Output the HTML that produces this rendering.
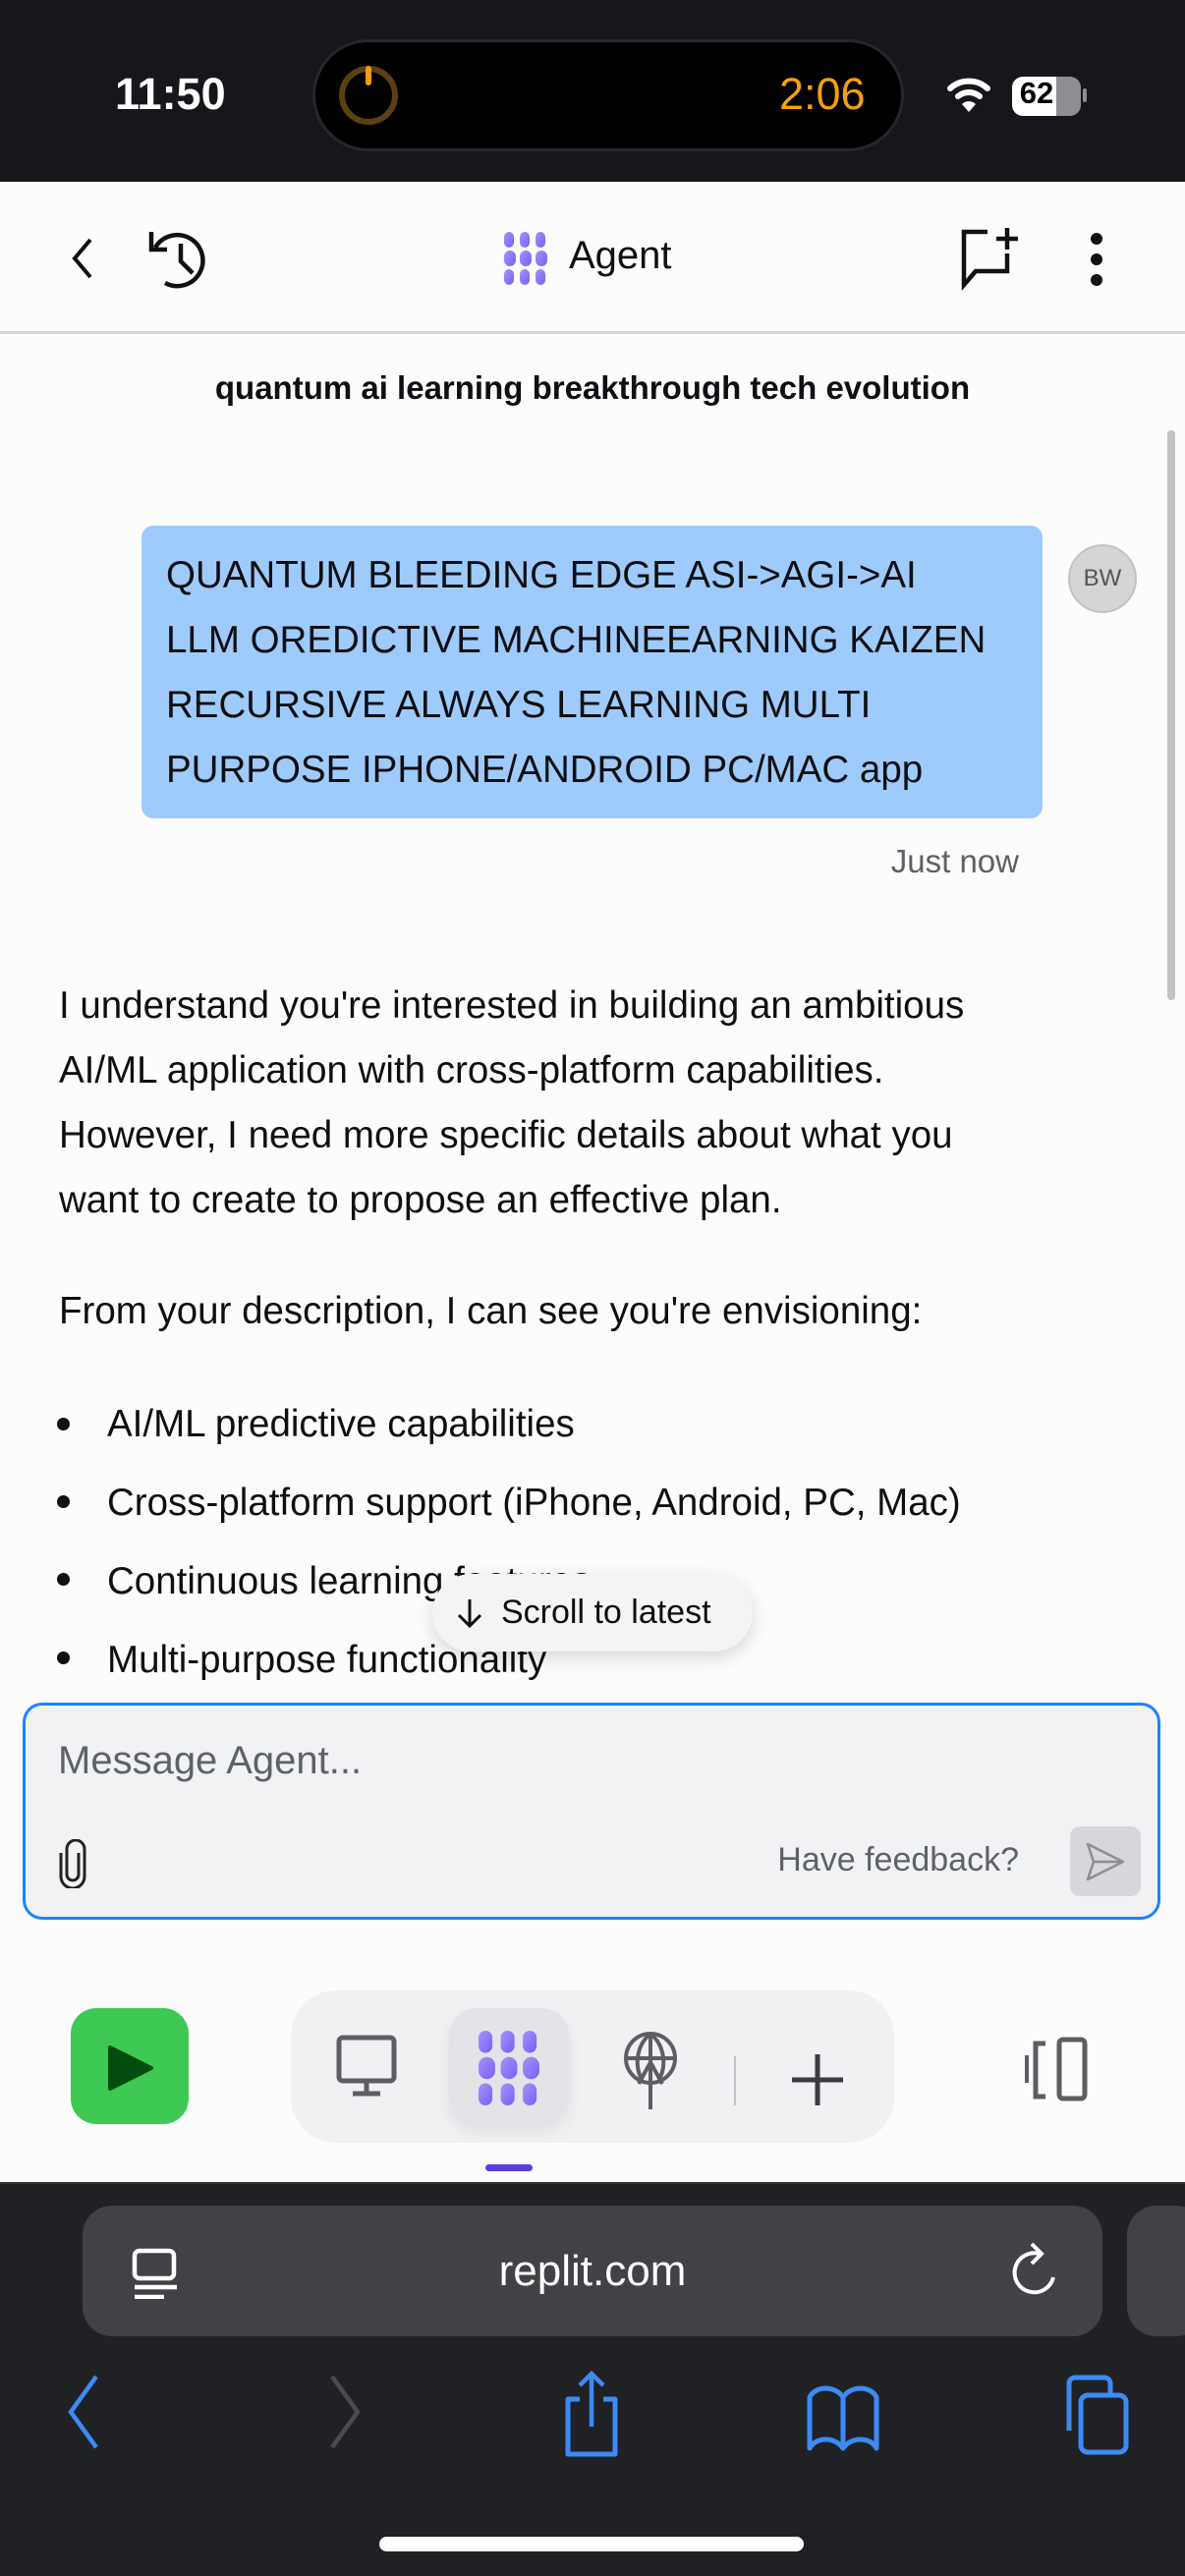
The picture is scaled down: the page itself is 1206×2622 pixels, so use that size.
<!DOCTYPE html>
<html><head><meta charset="utf-8"><style>
*{margin:0;padding:0;box-sizing:border-box}
body{width:1206px;height:2622px;position:relative;background:#fcfcfc;font-family:"Liberation Sans",sans-serif;overflow:hidden;color:#0e0f12}
.a{position:absolute;white-space:nowrap}
</style></head><body>
<!-- status bar -->
<div class="a" style="left:0;top:0;width:1206px;height:185px;background:#16171b"></div>
<div class="a" style="left:117px;top:70px;font-size:45px;font-weight:600;color:#fff">11:50</div>
<div class="a" style="left:318px;top:40px;width:602px;height:114px;border-radius:57px;background:#000;border:3px solid #26272b"></div>
<svg class="a" style="left:340px;top:62px" width="70" height="70" viewBox="0 0 70 70"><circle cx="35" cy="35" r="27" fill="none" stroke="#5e3f13" stroke-width="6"/><line x1="35" y1="8" x2="35" y2="22" stroke="#f19b12" stroke-width="6" stroke-linecap="round"/></svg>
<div class="a" style="left:793px;top:70px;font-size:45px;font-weight:500;color:#f5a00f">2:06</div>
<svg class="a" style="left:964px;top:76px" width="44" height="40" viewBox="0 0 44 40"><path d="M3 14 A28 28 0 0 1 41 14" fill="none" stroke="#fff" stroke-width="6" stroke-linecap="round"/><path d="M11 22 A17 17 0 0 1 33 22" fill="none" stroke="#fff" stroke-width="6" stroke-linecap="round"/><path d="M22 38 L15 30 A10 10 0 0 1 29 30 Z" fill="#fff"/></svg>
<div class="a" style="left:1030px;top:78px;width:70px;height:40px;border-radius:11px;background:linear-gradient(90deg,#fff 0 64%,#8d8e91 64%)"></div>
<div class="a" style="left:1032px;top:77px;width:46px;font-size:31px;font-weight:700;color:#000;text-align:center">62</div>
<div class="a" style="left:1102px;top:90px;width:4px;height:14px;background:#8d8e91;border-radius:2px"></div>

<!-- header -->
<div class="a" style="left:0;top:185px;width:1206px;height:155px;background:#fcfcfc;border-bottom:3px solid #d6d6d8"></div>
<svg class="a" style="left:66px;top:240px" width="36" height="46" viewBox="0 0 36 46"><path d="M26 4 L10 23 L26 42" fill="none" stroke="#111" stroke-width="4"/></svg>
<svg class="a" style="left:148px;top:230px" width="72" height="68" viewBox="0 0 72 68"><path d="M10 22 A26 26 0 1 1 20 58" fill="none" stroke="#111" stroke-width="4.5"/><path d="M6 6 V24 H22" fill="none" stroke="#111" stroke-width="4.5"/><path d="M36 18 V36 L48 48" fill="none" stroke="#111" stroke-width="4.5"/></svg>
<svg class="a" style="left:511px;top:236px" width="48" height="54" viewBox="0 0 48 54"><defs><linearGradient id="g" x1="0" y1="0" x2="1" y2="1"><stop offset="0" stop-color="#a594fb"/><stop offset="1" stop-color="#7b5cf5"/></linearGradient></defs><g fill="url(#g)"><rect x="2" y="0" width="10" height="16" rx="5"/><rect x="18" y="0" width="10" height="16" rx="5"/><rect x="34" y="0" width="10" height="16" rx="5"/><rect x="2" y="19" width="12" height="16" rx="6"/><rect x="18" y="19" width="12" height="16" rx="6"/><rect x="34" y="19" width="12" height="16" rx="6"/><rect x="2" y="38" width="10" height="16" rx="5"/><rect x="18" y="38" width="10" height="16" rx="5"/><rect x="34" y="38" width="10" height="16" rx="5"/></g></svg>
<div class="a" style="left:579px;top:238px;font-size:40px;font-weight:500;color:#0e0f12">Agent</div>
<svg class="a" style="left:975px;top:230px" width="70" height="66" viewBox="0 0 70 66"><path d="M30 6 H6 V60 L18 46 H50 V28" fill="none" stroke="#111" stroke-width="4.5"/><path d="M50 2 V24 M39 13 H61" stroke="#111" stroke-width="4.5"/></svg>
<div class="a" style="left:1110px;top:237px;width:12px;height:12px;border-radius:6px;background:#111"></div>
<div class="a" style="left:1110px;top:258px;width:12px;height:12px;border-radius:6px;background:#111"></div>
<div class="a" style="left:1110px;top:279px;width:12px;height:12px;border-radius:6px;background:#111"></div>

<div class="a" style="left:0;top:376px;width:1206px;text-align:center;font-size:33px;font-weight:600">quantum ai learning breakthrough tech evolution</div>
<div class="a" style="left:1188px;top:438px;width:8px;height:580px;border-radius:4px;background:#c3c3c5"></div>

<!-- user bubble -->
<div class="a" style="left:144px;top:535px;width:917px;height:298px;border-radius:12px;background:#9ecbfc"></div>
<div class="a" style="left:169px;top:553px;font-size:38.5px;line-height:66px;color:#0e0f12">QUANTUM BLEEDING EDGE ASI-&gt;AGI-&gt;AI<br>LLM OREDICTIVE MACHINEEARNING KAIZEN<br>RECURSIVE ALWAYS LEARNING MULTI<br>PURPOSE IPHONE/ANDROID PC/MAC app</div>
<div class="a" style="left:1087px;top:554px;width:70px;height:70px;border-radius:35px;background:#d5d5d7;border:2px solid #c2c2c4;font-size:24px;color:#555;text-align:center;line-height:66px">BW</div>
<div class="a" style="left:837px;top:858px;width:200px;text-align:right;font-size:33px;color:#5f6168">Just now</div>

<!-- agent text -->
<div class="a" style="left:60px;top:991px;font-size:38.5px;line-height:66px;color:#0e0f12">I understand you're interested in building an ambitious<br>AI/ML application with cross-platform capabilities.<br>However, I need more specific details about what you<br>want to create to propose an effective plan.</div>
<div class="a" style="left:60px;top:1302px;font-size:38.5px;line-height:66px">From your description, I can see you're envisioning:</div>
<div class="a" style="left:58px;top:1443px;width:13px;height:13px;border-radius:7px;background:#111"></div>
<div class="a" style="left:58px;top:1522px;width:13px;height:13px;border-radius:7px;background:#111"></div>
<div class="a" style="left:58px;top:1601px;width:13px;height:13px;border-radius:7px;background:#111"></div>
<div class="a" style="left:58px;top:1681px;width:13px;height:13px;border-radius:7px;background:#111"></div>
<div class="a" style="left:109px;top:1410px;font-size:38.5px;line-height:80px">AI/ML predictive capabilities<br>Cross-platform support (iPhone, Android, PC, Mac)<br>Continuous learning features<br>Multi-purpose functionality</div>
<div class="a" style="left:0;top:1712px;width:1206px;height:20px;background:linear-gradient(#fcfcfc00,#fcfcfc)"></div>
<div class="a" style="left:440px;top:1602px;width:326px;height:79px;border-radius:40px;background:#f4f4f5;box-shadow:0 6px 18px rgba(0,0,0,.15);font-size:34px;line-height:79px;padding-left:70px;color:#0e0f12">Scroll to latest</div>
<svg class="a" style="left:462px;top:1625px" width="32" height="34" viewBox="0 0 32 34"><path d="M16 3 V30 M5 19 L16 30 L27 19" fill="none" stroke="#111" stroke-width="3"/></svg>

<!-- input -->
<div class="a" style="left:23px;top:1733px;width:1158px;height:221px;border-radius:20px;background:#f1f2f4;border:3px solid #1b84ff"></div>
<div class="a" style="left:59px;top:1770px;font-size:40px;color:#5f6168">Message Agent...</div>
<svg class="a" style="left:58px;top:1872px" width="32" height="50" viewBox="0 0 32 50"><path d="M22 14 V36 A6 6 0 0 1 10 36 V10 A9 9 0 0 1 28 10 V38 A12 12 0 0 1 4 38 V14" fill="none" stroke="#222" stroke-width="3"/></svg>
<div class="a" style="left:737px;top:1874px;width:300px;text-align:right;font-size:34px;color:#5f6168">Have feedback?</div>
<div class="a" style="left:1089px;top:1859px;width:72px;height:71px;border-radius:10px;background:#d6d7da"></div>
<svg class="a" style="left:1103px;top:1874px" width="44" height="42" viewBox="0 0 44 42"><path d="M4 3 L40 21 L4 39 L10 21 Z M10 21 H40" fill="none" stroke="#8d8e92" stroke-width="2.5" stroke-linejoin="round"/></svg>

<!-- bottom toolbar -->
<div class="a" style="left:72px;top:2044px;width:120px;height:118px;border-radius:26px;background:#3dc954"></div>
<svg class="a" style="left:106px;top:2080px" width="56" height="50" viewBox="0 0 56 50"><path d="M6 4 L48 25 L6 46 Z" fill="#024d0e" stroke="#024d0e" stroke-width="4" stroke-linejoin="round"/></svg>
<div class="a" style="left:296px;top:2026px;width:614px;height:155px;border-radius:46px;background:#f0f1f3"></div>
<div class="a" style="left:457px;top:2044px;width:122px;height:117px;border-radius:28px;background:#e3e4e7;box-shadow:0 8px 16px rgba(0,0,0,.08)"></div>
<svg class="a" style="left:340px;top:2070px" width="66" height="66" viewBox="0 0 66 66"><rect x="5" y="4" width="56" height="44" rx="4" fill="none" stroke="#5c5e63" stroke-width="5"/><path d="M33 48 V60 M19 61 H47" stroke="#5c5e63" stroke-width="5"/></svg>
<svg class="a" style="left:480px;top:2067px" width="76" height="76" viewBox="0 0 48 54"><defs><linearGradient id="g2" x1="0" y1="0" x2="1" y2="1"><stop offset="0" stop-color="#a594fb"/><stop offset="1" stop-color="#7b5cf5"/></linearGradient></defs><g fill="url(#g2)"><rect x="2" y="0" width="10" height="16" rx="5"/><rect x="18" y="0" width="10" height="16" rx="5"/><rect x="34" y="0" width="10" height="16" rx="5"/><rect x="2" y="19" width="12" height="16" rx="6"/><rect x="18" y="19" width="12" height="16" rx="6"/><rect x="34" y="19" width="12" height="16" rx="6"/><rect x="2" y="38" width="10" height="16" rx="5"/><rect x="18" y="38" width="10" height="16" rx="5"/><rect x="34" y="38" width="10" height="16" rx="5"/></g></svg>
<svg class="a" style="left:630px;top:2065px" width="64" height="84" viewBox="0 0 64 84"><circle cx="32" cy="30" r="25" fill="none" stroke="#5c5e63" stroke-width="4"/><path d="M32 5 V82 M7 30 H57 M32 5 C16 18 16 42 24 52 M32 5 C48 18 48 42 40 52 M20 56 L32 34 L44 56" fill="none" stroke="#5c5e63" stroke-width="4"/></svg>
<div class="a" style="left:747px;top:2093px;width:2px;height:50px;background:#c0c1c4"></div>
<svg class="a" style="left:804px;top:2089px" width="56" height="56" viewBox="0 0 56 56"><path d="M28 2 V54 M2 28 H54" stroke="#3a3c40" stroke-width="5"/></svg>
<svg class="a" style="left:1040px;top:2070px" width="70" height="70" viewBox="0 0 70 70"><path d="M5 22 V50" stroke="#5c5e63" stroke-width="4"/><path d="M24 10 H14 V64 H24" fill="none" stroke="#5c5e63" stroke-width="5"/><rect x="38" y="6" width="26" height="60" rx="4" fill="none" stroke="#5c5e63" stroke-width="5"/></svg>
<div class="a" style="left:494px;top:2203px;width:48px;height:7px;border-radius:4px;background:#5b3ce3"></div>

<!-- browser chrome -->
<div class="a" style="left:0;top:2221px;width:1206px;height:401px;background:#202124;border-top:2px solid #333"></div>
<div class="a" style="left:84px;top:2245px;width:1038px;height:133px;border-radius:30px;background:#414246"></div>
<div class="a" style="left:1147px;top:2245px;width:80px;height:133px;border-radius:30px;background:#414246"></div>
<svg class="a" style="left:134px;top:2288px" width="48" height="52" viewBox="0 0 48 52"><rect x="3" y="3" width="40" height="28" rx="5" fill="none" stroke="#fff" stroke-width="4.5"/><path d="M3 40 H46 M3 50 H33" stroke="#fff" stroke-width="4.5"/></svg>
<div class="a" style="left:0;top:2287px;width:1206px;text-align:center;font-size:44px;color:#fff">replit.com</div>
<svg class="a" style="left:1028px;top:2282px" width="50" height="62" viewBox="0 0 50 62"><path d="M30 12 A20 20 0 1 0 44 36" fill="none" stroke="#fff" stroke-width="4"/><path d="M22 2 L32 12 L22 22" fill="none" stroke="#fff" stroke-width="4"/></svg>
<svg class="a" style="left:66px;top:2415px" width="40" height="80" viewBox="0 0 40 80"><path d="M32 4 L6 40 L32 76" fill="none" stroke="#3d8af5" stroke-width="4.5"/></svg>
<svg class="a" style="left:330px;top:2415px" width="40" height="80" viewBox="0 0 40 80"><path d="M8 4 L34 40 L8 76" fill="none" stroke="#4a4b4f" stroke-width="4.5"/></svg>
<svg class="a" style="left:570px;top:2412px" width="64" height="90" viewBox="0 0 64 90"><path d="M20 30 H8 V86 H56 V30 H44" fill="none" stroke="#3d8af5" stroke-width="5" stroke-linejoin="round"/><path d="M32 58 V4 M20 16 L32 4 L44 16" fill="none" stroke="#3d8af5" stroke-width="4.5"/></svg>
<svg class="a" style="left:820px;top:2424px" width="76" height="72" viewBox="0 0 76 72"><path d="M38 16 C30 4 10 4 4 16 V68 C10 56 30 56 38 68 C46 56 66 56 72 68 V16 C66 4 46 4 38 16 Z M38 16 V68" fill="none" stroke="#3d8af5" stroke-width="5" stroke-linejoin="round"/></svg>
<svg class="a" style="left:1080px;top:2416px" width="72" height="84" viewBox="0 0 72 84"><path d="M8 58 V10 A6 6 0 0 1 14 4 H44 A6 6 0 0 1 50 10 V20" fill="none" stroke="#3d8af5" stroke-width="5"/><rect x="20" y="22" width="46" height="58" rx="7" fill="none" stroke="#3d8af5" stroke-width="5"/></svg>
<div class="a" style="left:386px;top:2582px;width:432px;height:15px;border-radius:8px;background:#fff"></div>
</body></html>
